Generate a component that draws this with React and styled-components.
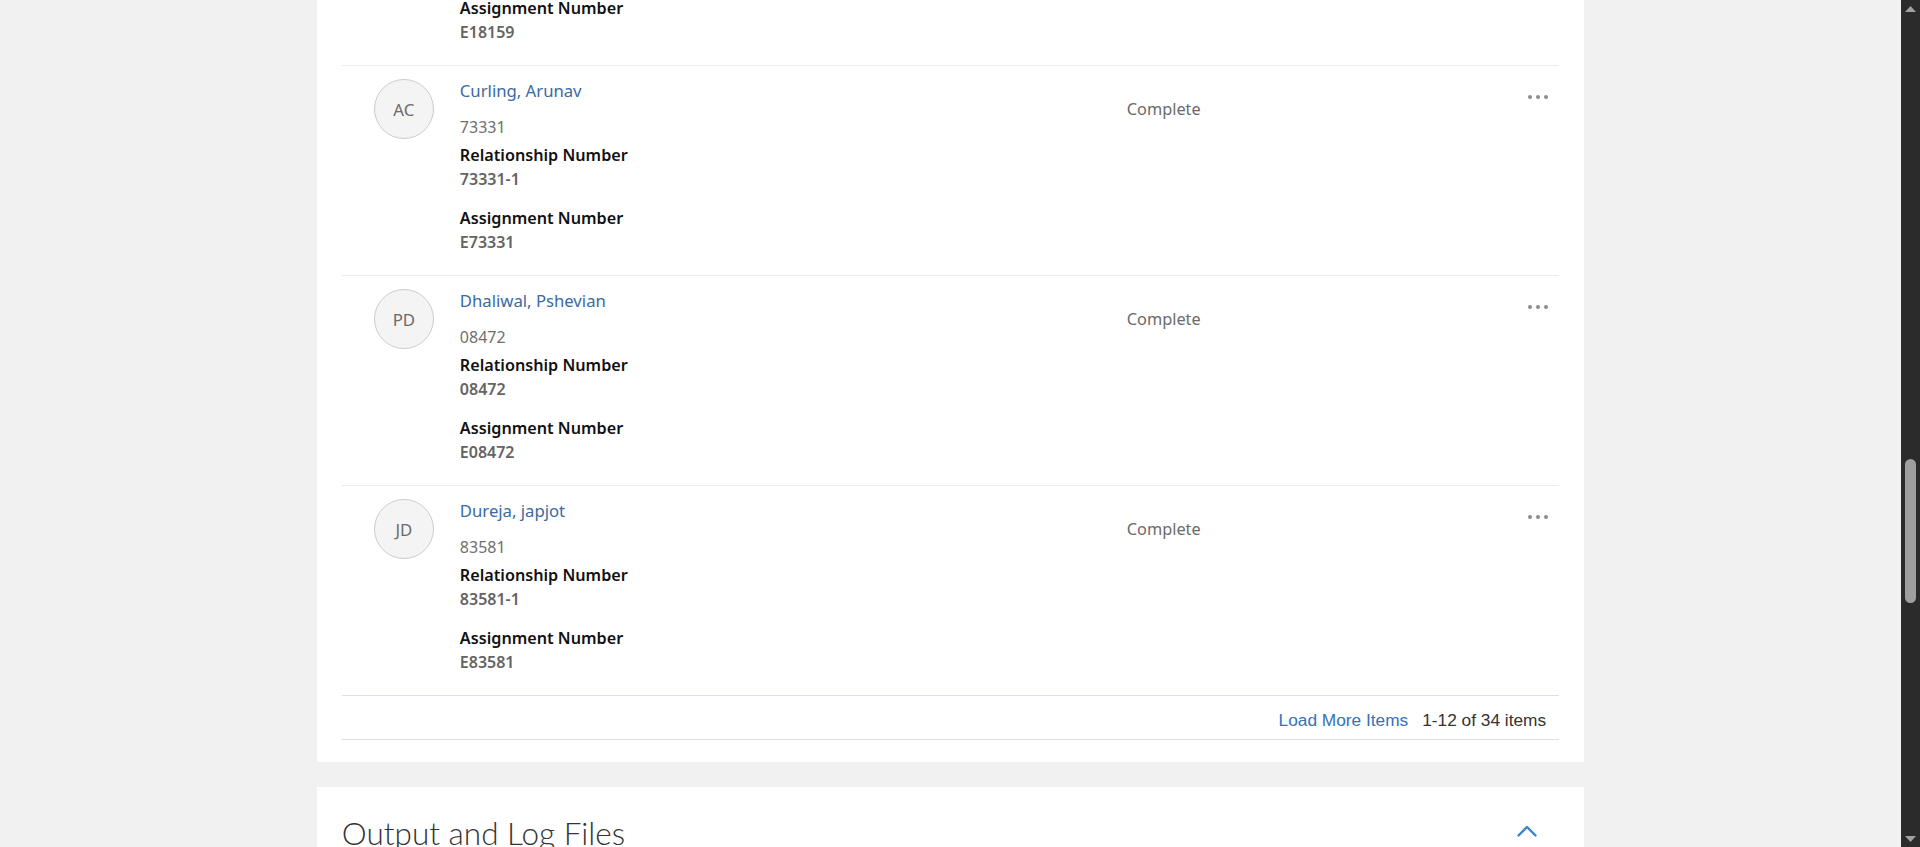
import React, { useLayoutEffect, useRef, useState, useCallback } from "react";
import styled, { createGlobalStyle } from "styled-components";

const GlobalStyle = createGlobalStyle`
  html, body { margin: 0; padding: 0; height: 100%; overflow: hidden; background: #f1f1f1; }
  #root { height: 100%; }
  *, *::before, *::after { box-sizing: border-box; }
`;

const Shell = styled.div`
  display: flex;
  height: 100vh;
  background: #f1f1f1;
`;

const Scroller = styled.div`
  flex: 1;
  min-width: 0;
  overflow-y: scroll;
  overflow-x: hidden;
  scrollbar-width: none;
  font-family: "Noto Sans", "Open Sans", Arial, sans-serif;
  color: #161513;
  &::-webkit-scrollbar { display: none; }
`;

const ScrollBar = styled.div`
  flex: none;
  width: 19px;
  background: #2b2b2b;
  display: flex;
  flex-direction: column;
`;

const ScrollArrow = styled.div`
  flex: none;
  height: 17px;
  display: flex;
  align-items: center;
  justify-content: center;
`;

const ScrollTrack = styled.div`
  flex: 1;
  position: relative;
`;

const ScrollThumb = styled.div`
  position: absolute;
  left: 4px;
  right: 4px;
  background: #9f9f9f;
  border-radius: 6px;
`;

const TopBar = styled.header`
  height: 56px;
  background: #ffffff;
  border-bottom: 1px solid #e0e0e0;
  display: flex;
  align-items: center;
  padding: 0 24px;
  font-size: 18px;
  color: #333;
`;

const Breadcrumbs = styled.nav`
  height: 36px;
  width: 66.6667%;
  margin: 0 auto;
  display: flex;
  align-items: flex-end;
  gap: 8px;
  font-size: 14px;
  color: #3a6ea5;
`;

const PageHeading = styled.h1`
  width: 66.6667%;
  margin: 0 auto;
  padding: 24px 0 16px;
  font-family: Lato, "Noto Sans", sans-serif;
  font-weight: 300;
  font-size: 30px;
  line-height: 36px;
  color: #333;
`;

const Main = styled.main`
  width: 66.6667%;
  margin: 0 auto;
  display: flex;
  flex-direction: column;
  gap: 25px;
  padding-bottom: 140px;
`;

const Card = styled.section`
  background: #ffffff;
  padding: 0 25px ${(p) => (p.$bottom ? p.$bottom : 22)}px;
`;

const CardHeader = styled.div`
  display: flex;
  align-items: center;
  justify-content: space-between;
  padding: 28px 0 ${(p) => p.$gap || 16}px;
`;

const CardTitle = styled.h2`
  margin: 0;
  font-family: Lato, "Noto Sans", sans-serif;
  font-weight: 300;
  font-size: 31.5px;
  line-height: 36px;
  color: #333333;
`;

const ToggleButton = styled.button`
  display: flex;
  align-items: center;
  justify-content: center;
  width: 24px;
  height: 24px;
  margin-right: 20px;
  margin-top: -4px;
  padding: 0;
  border: 0;
  background: transparent;
  cursor: pointer;
`;

const DetailGrid = styled.div`
  display: grid;
  grid-template-columns: repeat(3, 1fr);
  row-gap: 22px;
  column-gap: 24px;
  padding: 4px 0 8px;
`;

const Paragraph = styled.p`
  margin: 0 0 16px;
  font-size: 16px;
  line-height: 24px;
  color: #555;
`;

const List = styled.ul`
  list-style: none;
  margin: 0;
  padding: 0;
`;

const Row = styled.li`
  display: grid;
  grid-template-columns: 60px 641px 1fr auto;
  column-gap: 26px;
  align-items: start;
  padding: 13px 11px 21px 32px;
  border-top: 1px solid ${(p) => (p.$first ? "transparent" : "#ebebeb")};
`;

const Avatar = styled.div`
  width: 60px;
  height: 60px;
  border-radius: 50%;
  background: #f4f4f4;
  border: 1px solid #cccccc;
  display: flex;
  align-items: center;
  justify-content: center;
  font-size: 16.8px;
  color: #6b6b6b;
`;

const Info = styled.div`
  display: flex;
  flex-direction: column;
`;

const NameLink = styled.a`
  font-size: 16.7px;
  line-height: 24px;
  color: #3a6aa0;
  text-decoration: none;
  align-self: flex-start;
`;

const PersonId = styled.div`
  margin-top: 12px;
  font-size: 16px;
  line-height: 24px;
  color: #707070;
`;

const Fields = styled.div`
  margin-top: 4px;
  display: flex;
  flex-direction: column;
  gap: 15px;
`;

const Field = styled.div`
  display: flex;
  flex-direction: column;
`;

const Label = styled.div`
  font-size: 16.2px;
  line-height: 24px;
  font-weight: 600;
  color: #111111;
`;

const Value = styled.div`
  font-size: 16px;
  line-height: 24px;
  font-weight: 600;
  color: #646464;
`;

const Status = styled.div`
  margin-top: 18px;
  font-size: 16.3px;
  line-height: 24px;
  color: #6a6a6a;
`;

const MoreButton = styled.button`
  margin-top: 16px;
  padding: 0;
  border: 0;
  background: transparent;
  display: flex;
  cursor: pointer;
`;

const ListFooter = styled.div`
  display: flex;
  justify-content: flex-end;
  align-items: center;
  gap: 14px;
  border-top: 1px solid #d9e0e6;
  border-bottom: 1px solid #d9e0e6;
  padding: 14px 13px 9px;
  font-family: "Liberation Sans", Arial, sans-serif;
  font-size: 17.3px;
  line-height: 20px;
`;

const LoadMore = styled.a`
  color: #3572b6;
  text-decoration: none;
`;

const Count = styled.span`
  color: #333333;
`;

const Table = styled.table`
  width: 100%;
  border-collapse: collapse;
  font-size: 15px;
  th, td { text-align: left; padding: 12px 16px; border-bottom: 1px solid #ebebeb; }
  th { font-weight: 600; color: #333; background: #fafafa; }
  td { color: #555; }
`;

const Dots = () => (
  <svg width="20" height="4" viewBox="0 0 20 4">
    <circle cx="2" cy="2" r="2" fill="#8c8c8c" />
    <circle cx="10" cy="2" r="2" fill="#8c8c8c" />
    <circle cx="18" cy="2" r="2" fill="#8c8c8c" />
  </svg>
);

const ChevronUp = () => (
  <svg width="20" height="12" viewBox="0 0 20 12">
    <polyline points="1.5,10.5 10,2 18.5,10.5" fill="none" stroke="#3a82d4" strokeWidth="2.4" strokeLinecap="round" strokeLinejoin="round" />
  </svg>
);

const Triangle = ({ down }) => (
  <svg width="11" height="6" viewBox="0 0 11 6">
    <path d={down ? "M0 0 L5.5 6 L11 0 Z" : "M0 6 L5.5 0 L11 6 Z"} fill="#a0a0a0" />
  </svg>
);

const people = [
  { name: "Agarwal, Rohit", id: "40215", rel: "40215-1" },
  { name: "Ahmed, Sana", id: "55120", rel: "55120-1" },
  { name: "Banerjee, Priya", id: "21904", rel: "21904-1" },
  { name: "Bell, Thomas", id: "66731", rel: "66731-1" },
  { name: "Brar, Harleen", id: "30418", rel: "30418-1" },
  { name: "Chan, Kelvin", id: "47290", rel: "47290-1" },
  { name: "Chopra, Aman", id: "12658", rel: "12658-1" },
  { name: "Cooper, Lily", id: "90377", rel: "90377-1" },
  { name: "Cruz, Miguel", id: "18159", rel: "18159-1" },
  { name: "Curling, Arunav", id: "73331", rel: "73331-1" },
  { name: "Dhaliwal, Pshevian", id: "08472", rel: "08472" },
  { name: "Dureja, japjot", id: "83581", rel: "83581-1" },
];

const initials = (name) => {
  const [last, first] = name.split(",").map((s) => s.trim());
  return (first[0] + last[0]).toUpperCase();
};

const details = [
  ["Process Name", "Payroll Calculation"],
  ["Process ID", "1245873"],
  ["Status", "Succeeded"],
  ["Submitted By", "HCM_ADMIN"],
  ["Submission Time", "04/12/2024 9:14 AM"],
  ["Completion Time", "04/12/2024 9:32 AM"],
  ["Payroll", "Biweekly Payroll"],
  ["Period", "04/01/2024 - 04/14/2024"],
  ["Legislative Data Group", "US LDG"],
  ["Flow Name", "PAY_CALC_0412"],
  ["Checklist", "Payroll Cycle"],
  ["Priority", "Normal"],
  ["Persons Processed", "34"],
  ["Persons in Error", "0"],
  ["Warnings", "0"],
  ["Elapsed Time", "00:18:06"],
  ["Schedule", "As soon as possible"],
  ["Parent Process", "None"],
];

const files = [
  ["ESS_L_1245873", "Log", "12 KB"],
  ["ESS_O_1245873", "Output", "248 KB"],
  ["PayrollCalculation_Report.pdf", "Report", "1.2 MB"],
  ["PayrollCalculation_Errors.xml", "XML", "36 KB"],
  ["PayrollCalculation_Summary.xlsx", "Spreadsheet", "94 KB"],
];

const params = [
  ["Payroll Flow", "PAY_CALC_0412"],
  ["Payroll", "Biweekly Payroll"],
  ["Process End Date", "04/14/2024"],
  ["Date Earned", "04/14/2024"],
  ["Payroll Period", "1 2024 Bi-Week"],
  ["Run Type", "Regular"],
  ["Element Group", "All"],
  ["Process Configuration Group", "Default"],
  ["Consolidation Group", "Standard"],
  ["Payroll Relationship Group", "All"],
  ["Calculate Retroactive", "Yes"],
  ["Include Costing", "Yes"],
  ["Run Mode", "Normal"],
  ["Person Number", "All"],
  ["Department", "All"],
  ["Location", "All"],
  ["Output Format", "PDF"],
  ["Language", "American English"],
];

export default function App() {
  const scrollerRef = useRef(null);
  const anchorRef = useRef(null);
  const trackRef = useRef(null);
  const [thumb, setThumb] = useState({ top: 0, height: 0 });

  const updateThumb = useCallback(() => {
    const s = scrollerRef.current;
    const t = trackRef.current;
    if (!s || !t) return;
    const track = t.clientHeight;
    const height = Math.max(20, (track * s.clientHeight) / s.scrollHeight);
    const max = s.scrollHeight - s.clientHeight;
    const top = max > 0 ? (s.scrollTop / max) * (track - height) : 0;
    setThumb({ top, height });
  }, []);

  useLayoutEffect(() => {
    const s = scrollerRef.current;
    const a = anchorRef.current;
    if (s && a) {
      const offset = a.getBoundingClientRect().top - s.getBoundingClientRect().top + s.scrollTop;
      s.scrollTop = offset - 65;
    }
    updateThumb();
  }, [updateThumb]);

  return (
    <>
      <GlobalStyle />
      <Shell>
        <Scroller ref={scrollerRef} onScroll={updateThumb}>
          <TopBar>Scheduled Processes</TopBar>
          <Breadcrumbs>
            <span>Home</span>
            <span>/</span>
            <span>Payroll</span>
            <span>/</span>
            <span>Scheduled Processes</span>
          </Breadcrumbs>
          <PageHeading>Process Details: Payroll Calculation</PageHeading>
          <Main>
            <Card>
              <CardHeader>
                <CardTitle>Summary</CardTitle>
                <ToggleButton aria-label="Collapse"><ChevronUp /></ToggleButton>
              </CardHeader>
              <DetailGrid>
                {details.map(([l, v]) => (
                  <Field key={l}>
                    <Label>{l}</Label>
                    <Value>{v}</Value>
                  </Field>
                ))}
              </DetailGrid>
            </Card>

            <Card>
              <CardHeader $gap={8}>
                <CardTitle>Processed Persons</CardTitle>
                <ToggleButton aria-label="Collapse"><ChevronUp /></ToggleButton>
              </CardHeader>
              <List>
                {people.map((p, i) => (
                  <Row key={p.name} $first={i === 0} ref={i === 9 ? anchorRef : undefined}>
                    <Avatar>{initials(p.name)}</Avatar>
                    <Info>
                      <NameLink href="#">{p.name}</NameLink>
                      <PersonId>{p.id}</PersonId>
                      <Fields>
                        <Field>
                          <Label>Relationship Number</Label>
                          <Value>{p.rel}</Value>
                        </Field>
                        <Field>
                          <Label>Assignment Number</Label>
                          <Value>E{p.id}</Value>
                        </Field>
                      </Fields>
                    </Info>
                    <Status>Complete</Status>
                    <MoreButton aria-label="More actions"><Dots /></MoreButton>
                  </Row>
                ))}
              </List>
              <ListFooter>
                <LoadMore href="#">Load More Items</LoadMore>
                <Count>1-12 of 34 items</Count>
              </ListFooter>
            </Card>

            <Card $bottom={28}>
              <CardHeader>
                <CardTitle>Output and Log Files</CardTitle>
                <ToggleButton aria-label="Collapse"><ChevronUp /></ToggleButton>
              </CardHeader>
              <Table>
                <thead>
                  <tr><th>File Name</th><th>Type</th><th>Size</th></tr>
                </thead>
                <tbody>
                  {files.map(([n, t, s]) => (
                    <tr key={n}><td>{n}</td><td>{t}</td><td>{s}</td></tr>
                  ))}
                </tbody>
              </Table>
            </Card>

            <Card $bottom={28}>
              <CardHeader>
                <CardTitle>Parameters</CardTitle>
                <ToggleButton aria-label="Collapse"><ChevronUp /></ToggleButton>
              </CardHeader>
              <DetailGrid>
                {params.map(([l, v]) => (
                  <Field key={l}>
                    <Label>{l}</Label>
                    <Value>{v}</Value>
                  </Field>
                ))}
              </DetailGrid>
            </Card>

            <Card $bottom={28}>
              <CardHeader>
                <CardTitle>Notifications</CardTitle>
                <ToggleButton aria-label="Collapse"><ChevronUp /></ToggleButton>
              </CardHeader>
              <Paragraph>Notifications are sent to the submitter when the process completes, ends with warnings, or ends in error.</Paragraph>
              <Paragraph>Recipients: HCM_ADMIN, Payroll Manager</Paragraph>
              <Paragraph>Delivery: Worklist and email</Paragraph>
              <Paragraph>Last notification sent 04/12/2024 9:32 AM.</Paragraph>
              <Paragraph>No further actions are required for this process.</Paragraph>
            </Card>
          </Main>
        </Scroller>
        <ScrollBar>
          <ScrollArrow><Triangle /></ScrollArrow>
          <ScrollTrack ref={trackRef}>
            <ScrollThumb style={{ top: thumb.top, height: thumb.height }} />
          </ScrollTrack>
          <ScrollArrow><Triangle down /></ScrollArrow>
        </ScrollBar>
      </Shell>
    </>
  );
}
